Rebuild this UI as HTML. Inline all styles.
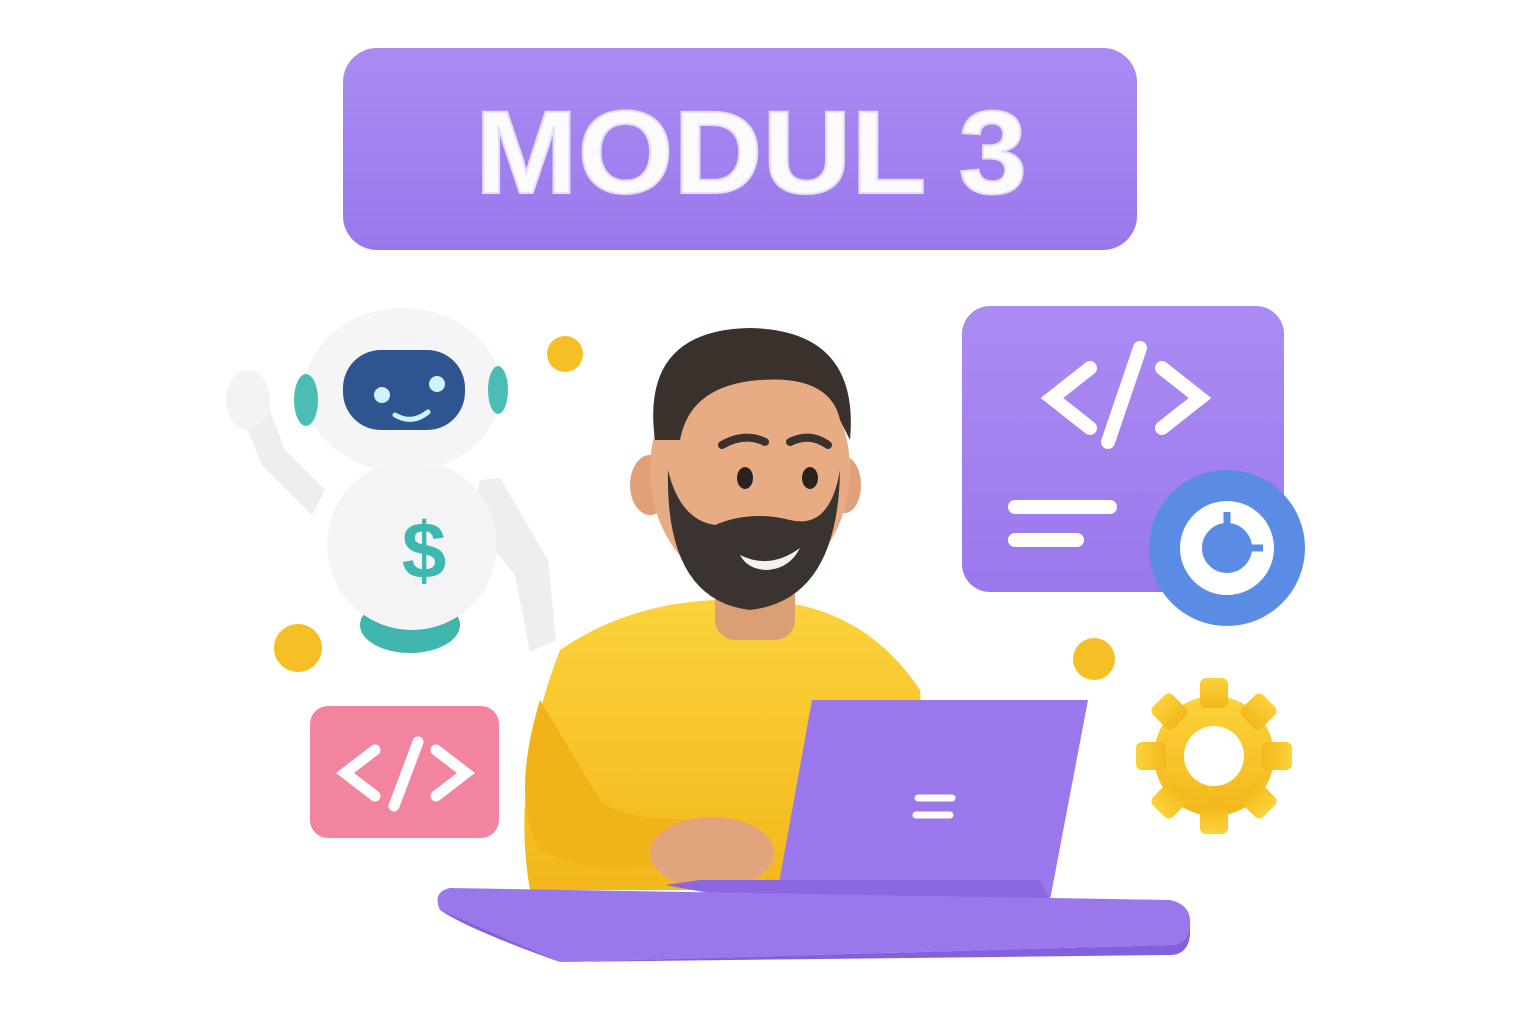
<!DOCTYPE html>
<html><head><meta charset="utf-8"><style>
html,body{margin:0;padding:0;background:#fff;width:1536px;height:1024px;overflow:hidden}
svg{display:block}
</style></head><body>
<svg width="1536" height="1024" viewBox="0 0 1536 1024" xmlns="http://www.w3.org/2000/svg">
<defs>
<linearGradient id="pg" x1="0" y1="0" x2="0" y2="1"><stop offset="0" stop-color="#ab8bf3"/><stop offset="1" stop-color="#9a78ec"/></linearGradient>
<linearGradient id="yg" x1="0" y1="0" x2="0" y2="1"><stop offset="0" stop-color="#fcd23a"/><stop offset="1" stop-color="#f2b81c"/></linearGradient>
</defs>
<rect x="343" y="48" width="794" height="202" rx="34" fill="url(#pg)"/>
<text x="751" y="193" text-anchor="middle" textLength="552" lengthAdjust="spacingAndGlyphs" font-family="Liberation Sans, sans-serif" font-weight="700" font-size="118" fill="#fbfbfd" stroke="#e6e0f5" stroke-width="2">MODUL 3</text>
<rect x="962" y="306" width="322" height="286" rx="28" fill="url(#pg)"/>
<g stroke="#fff" stroke-width="14" stroke-linecap="round" fill="none">
<polyline points="1090,368 1052,398 1090,428"/>
<polyline points="1162,368 1200,398 1162,428"/>
<line x1="1140" y1="348" x2="1108" y2="442"/>
<line x1="1015" y1="507" x2="1110" y2="507"/>
<line x1="1015" y1="540" x2="1077" y2="540"/>
</g>
<circle cx="1227" cy="548" r="78" fill="#5a8ce6"/>
<circle cx="1227" cy="548" r="36" fill="none" stroke="#fff" stroke-width="22"/>
<path d="M1227 512 L1227 548 L1263 548" stroke="#5a8ce6" stroke-width="7" fill="none"/>
<g transform="translate(1214,756)" fill="url(#yg)">
<circle r="60"/>
<g><rect x="-14" y="-78" width="28" height="30" rx="6"/><rect x="-14" y="-78" width="28" height="30" rx="6" transform="rotate(45)"/><rect x="-14" y="-78" width="28" height="30" rx="6" transform="rotate(90)"/><rect x="-14" y="-78" width="28" height="30" rx="6" transform="rotate(135)"/><rect x="-14" y="-78" width="28" height="30" rx="6" transform="rotate(180)"/><rect x="-14" y="-78" width="28" height="30" rx="6" transform="rotate(225)"/><rect x="-14" y="-78" width="28" height="30" rx="6" transform="rotate(270)"/><rect x="-14" y="-78" width="28" height="30" rx="6" transform="rotate(315)"/></g>
<circle r="30" fill="#fff"/>
</g>
<rect x="310" y="706" width="189" height="132" rx="18" fill="#f2849f"/>
<g stroke="#fff" stroke-width="11" stroke-linecap="round" fill="none">
<polyline points="375,750 345,773 375,796"/>
<polyline points="436,750 466,773 436,796"/>
<line x1="418" y1="742" x2="394" y2="806"/>
</g>
<circle cx="565" cy="354" r="18" fill="#f6bf25"/>
<circle cx="298" cy="648" r="24" fill="#f6bf25"/>
<circle cx="1094" cy="659" r="21" fill="#f6bf25"/>
<ellipse cx="410" cy="625" rx="50" ry="28" fill="#3fb5ad"/>
<path d="M235 400 L260 385 L285 450 L325 490 L312 515 L262 465 Z" fill="#eeeef1"/>
<ellipse cx="248" cy="400" rx="22" ry="30" fill="#f3f3f5"/>
<path d="M480 480 L500 478 L548 560 L556 640 L530 652 L515 575 L470 520 Z" fill="#eeeef1"/>
<ellipse cx="412" cy="545" rx="85" ry="85" fill="#f4f4f6"/>
<text x="424" y="578" text-anchor="middle" font-family="Liberation Sans, sans-serif" font-weight="700" font-size="80" fill="#3cb8b0">$</text>
<ellipse cx="403" cy="390" rx="98" ry="82" fill="#f5f5f7"/>
<ellipse cx="306" cy="400" rx="12" ry="26" fill="#4cbdb4"/>
<ellipse cx="498" cy="390" rx="10" ry="24" fill="#4cbdb4"/>
<rect x="343" y="350" width="122" height="80" rx="38" fill="#2f5590"/>
<circle cx="382" cy="395" r="8" fill="#cdf4ff"/>
<circle cx="437" cy="384" r="8" fill="#cdf4ff"/>
<path d="M395 415 Q412 425 428 412" stroke="#cdf4ff" stroke-width="5" fill="none" stroke-linecap="round"/>
<path d="M560 650 Q640 595 750 600 Q860 600 920 690 L930 890 L530 890 Q510 780 560 650 Z" fill="url(#yg)"/>
<path d="M540 700 Q510 800 540 850 Q600 880 680 860 L700 820 Q620 820 600 800 Z" fill="#f0b419"/>
<rect x="715" y="570" width="80" height="70" rx="20" fill="#dc9e74"/>
<ellipse cx="650" cy="485" rx="20" ry="30" fill="#e0a07a"/>
<ellipse cx="845" cy="485" rx="16" ry="28" fill="#e0a07a"/>
<ellipse cx="750" cy="470" rx="100" ry="120" fill="#e8ac84"/>
<path d="M668 470 Q665 600 750 610 Q838 600 840 470 Q830 530 790 520 Q750 510 715 525 Q680 520 668 470 Z" fill="#3b3330"/>
<path d="M740 555 Q770 570 800 548 Q790 568 768 570 Q748 570 740 555 Z" fill="#f2f2f2"/>
<path d="M655 440 Q640 330 750 328 Q860 330 850 440 L840 420 Q830 375 760 380 Q690 385 680 440 Z" fill="#3a302c"/>
<ellipse cx="745" cy="478" rx="8" ry="11" fill="#2b221f"/>
<ellipse cx="810" cy="478" rx="8" ry="11" fill="#2b221f"/>
<path d="M722 445 Q745 432 765 442 M790 442 Q810 432 828 445" stroke="#3a302c" stroke-width="8" fill="none" stroke-linecap="round"/>
<ellipse cx="712" cy="853" rx="62" ry="36" fill="#e2a47c"/>
<polygon points="812,700 1088,700 1050,900 775,905" fill="#9a78ec"/>
<polygon points="665,885 775,905 1050,900 1040,880 700,880" fill="#8b68e2"/>
<g stroke="#fff" stroke-width="7" stroke-linecap="round"><line x1="918" y1="798" x2="952" y2="798"/><line x1="916" y1="815" x2="950" y2="815"/></g>
<path d="M450 888 L1170 900 Q1192 905 1190 925 Q1188 945 1170 945 L560 962 Q470 930 440 910 Q432 892 450 888 Z" fill="#9b77ec"/>
<path d="M440 910 Q470 930 560 962 L1170 945 Q1188 945 1190 925 L1190 935 Q1188 955 1170 955 L560 962 Z" fill="#8460de"/>
</svg>
</body></html>
